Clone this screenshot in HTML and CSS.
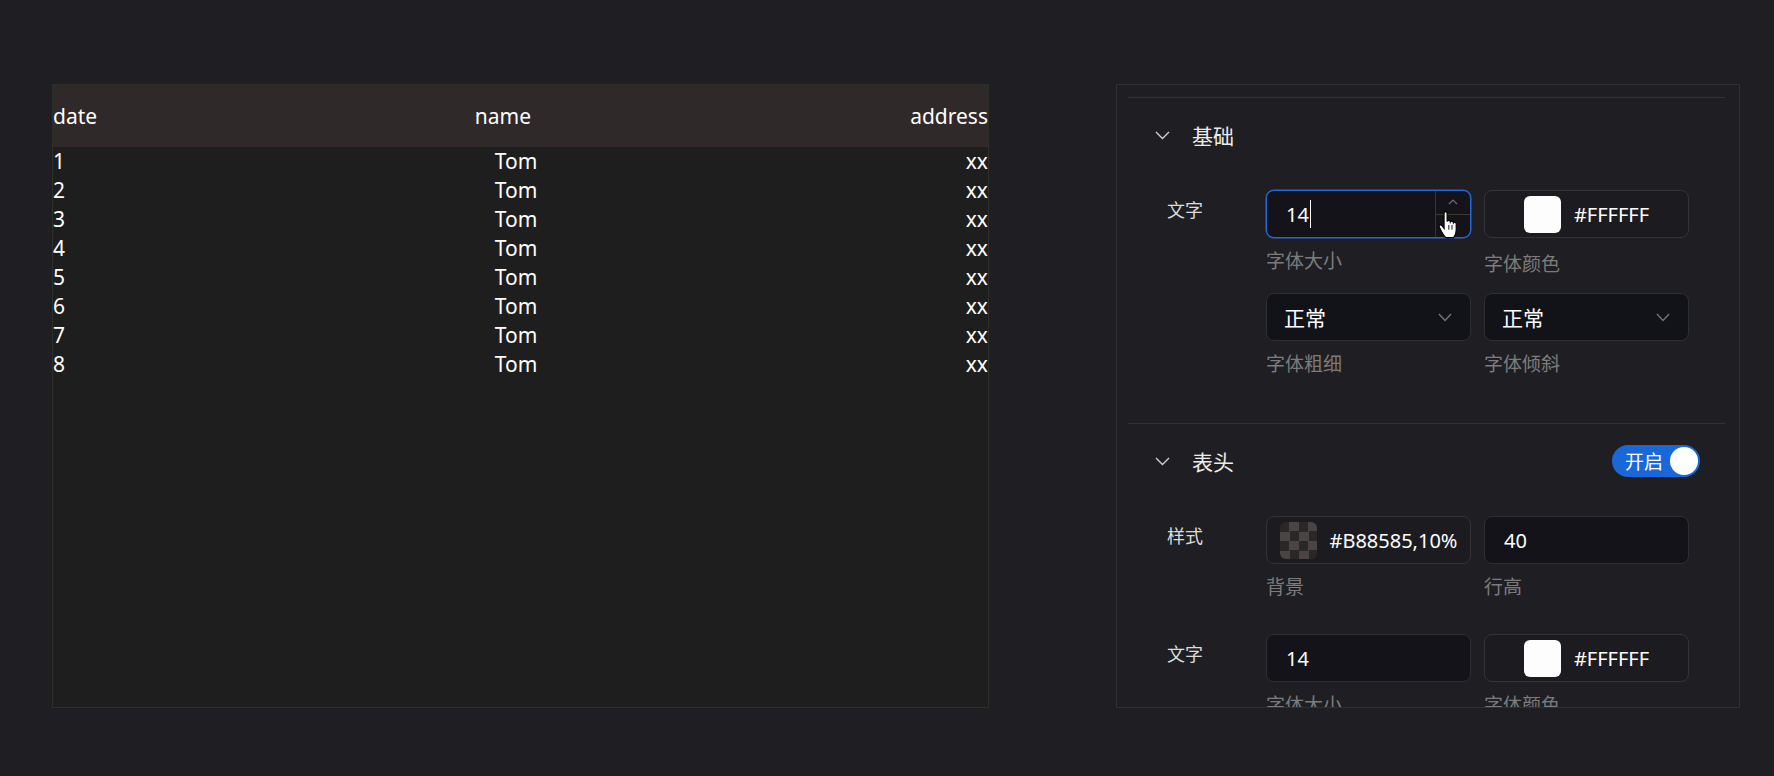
FILE: index.html
```html
<!DOCTYPE html>
<html lang="zh">
<head>
<meta charset="utf-8">
<title>Table config</title>
<link rel="stylesheet" href="styles.css">
</head>
<body>
<div class="page">
  <div class="table">
    <div class="thead">
      <div class="c-date">date</div>
      <div class="c-name">name</div>
      <div class="c-addr">address</div>
    </div>
    <div class="tbody">
      <div class="tr"><div class="c-date">1</div><div class="c-name">Tom</div><div class="c-addr">xx</div></div>
      <div class="tr"><div class="c-date">2</div><div class="c-name">Tom</div><div class="c-addr">xx</div></div>
      <div class="tr"><div class="c-date">3</div><div class="c-name">Tom</div><div class="c-addr">xx</div></div>
      <div class="tr"><div class="c-date">4</div><div class="c-name">Tom</div><div class="c-addr">xx</div></div>
      <div class="tr"><div class="c-date">5</div><div class="c-name">Tom</div><div class="c-addr">xx</div></div>
      <div class="tr"><div class="c-date">6</div><div class="c-name">Tom</div><div class="c-addr">xx</div></div>
      <div class="tr"><div class="c-date">7</div><div class="c-name">Tom</div><div class="c-addr">xx</div></div>
      <div class="tr"><div class="c-date">8</div><div class="c-name">Tom</div><div class="c-addr">xx</div></div>
    </div>
  </div>

  <div class="panel">
    <section class="sec sec-first">
      <div class="sec-head">
        <svg class="chev" width="15" height="9" viewBox="0 0 15 9"><path d="M1 1 L7.5 7.5 L14 1" fill="none" stroke="#d0d0d0" stroke-width="1.4"/></svg>
        <span class="sec-title">基础</span>
      </div>
      <div class="sec-body">
        <div class="field">
          <div class="label">文字</div>
          <div class="controls">
            <div class="item">
              <div class="box num focus">
                <span class="val">14</span><span class="caret"></span>
                <div class="spin">
                  <div class="spin-up"><svg width="10" height="6" viewBox="0 0 10 6"><path d="M1 5 L5 1 L9 5" fill="none" stroke="#6f6f6f" stroke-width="1.2"/></svg></div>
                  <div class="spin-down"></div>
                </div>
                <svg class="hand" width="21" height="28" viewBox="0 0 18 24"><path d="M5.2 2 Q5.2 0.6 6.5 0.6 Q7.8 0.6 7.8 2 L7.8 9 Q8.2 8 9.3 8 Q10.5 8 10.6 9.4 Q11 8.6 12 8.7 Q13.1 8.8 13.2 10.2 Q13.6 9.5 14.5 9.6 Q15.6 9.8 15.6 11.2 L15.6 16.5 Q15.6 20 13.4 22.8 L6.6 22.8 Q5 21 3 17.5 L1 13.6 Q0.6 12.4 1.6 12 Q2.6 11.6 3.6 12.8 L5.2 15 Z" fill="#fff" stroke="#000" stroke-width="1"/><path d="M9.3 12 V16 M12 12 V16" stroke="#000" stroke-width="0.8"/></svg>
              </div>
              <div class="cap">字体大小</div>
            </div>
            <div class="item">
              <div class="box color">
                <span class="swatch white"></span><span class="val">#FFFFFF</span>
              </div>
              <div class="cap cap-low">字体颜色</div>
            </div>
            <div class="item">
              <div class="box select">
                <span class="val sel">正常</span>
                <svg class="dd" width="14" height="9" viewBox="0 0 14 9"><path d="M1 1 L7 7.5 L13 1" fill="none" stroke="#777" stroke-width="1.3"/></svg>
              </div>
              <div class="cap">字体粗细</div>
            </div>
            <div class="item">
              <div class="box select">
                <span class="val sel">正常</span>
                <svg class="dd" width="14" height="9" viewBox="0 0 14 9"><path d="M1 1 L7 7.5 L13 1" fill="none" stroke="#777" stroke-width="1.3"/></svg>
              </div>
              <div class="cap">字体倾斜</div>
            </div>
          </div>
        </div>
      </div>
    </section>

    <section class="sec">
      <div class="sec-head">
        <svg class="chev" width="15" height="9" viewBox="0 0 15 9"><path d="M1 1 L7.5 7.5 L14 1" fill="none" stroke="#d0d0d0" stroke-width="1.4"/></svg>
        <span class="sec-title">表头</span>
        <div class="toggle"><span class="toggle-text">开启</span><span class="knob"></span></div>
      </div>
      <div class="sec-body">
        <div class="field">
          <div class="label">样式</div>
          <div class="controls">
            <div class="item">
              <div class="box color">
                <span class="swatch checker"></span><span class="val">#B88585,10%</span>
              </div>
              <div class="cap">背景</div>
            </div>
            <div class="item">
              <div class="box num">
                <span class="val">40</span>
              </div>
              <div class="cap">行高</div>
            </div>
          </div>
        </div>
        <div class="field">
          <div class="label">文字</div>
          <div class="controls">
            <div class="item">
              <div class="box num">
                <span class="val">14</span>
              </div>
              <div class="cap">字体大小</div>
            </div>
            <div class="item">
              <div class="box color">
                <span class="swatch white"></span><span class="val">#FFFFFF</span>
              </div>
              <div class="cap">字体颜色</div>
            </div>
          </div>
        </div>
      </div>
    </section>
  </div>
</div>
</body>
</html>
```

FILE: styles.css
```css
html, body {
  margin: 0;
  padding: 0;
  background: #1f1f23;
  font-family: "Noto Sans", "Noto Sans CJK SC", sans-serif;
  color: #fff;
}

.page {
  display: flex;
  align-items: flex-start;
  gap: 127px;
  padding: 84px 34px 0 52px;
  height: 776px;
  box-sizing: border-box;
}

/* ---------- table ---------- */
.table {
  width: 937px;
  height: 624px;
  box-sizing: border-box;
  border: 1px solid #2f2f2a;
  background: #1e1e1f;
  font-size: 21px;
  flex: none;
}

.thead, .tr {
  display: grid;
  grid-template-columns: 1fr 1fr 1fr;
  align-items: center;
}

.thead {
  height: 62px;
  background: #2f2929;
}

.tr {
  height: 29px;
  line-height: 29px;
}

.c-date { text-align: left; }
.c-name { text-align: center; }
.c-addr { text-align: right; }

.thead .c-name { padding-right: 35px; }
.tr .c-name { padding-right: 9px; }

/* ---------- panel ---------- */
.panel {
  width: 624px;
  height: 624px;
  box-sizing: border-box;
  border: 1px solid #303030;
  padding: 12px 14px 0 11px;
  overflow: hidden;
  flex: none;
}

.sec {
  border-top: 1px solid #323236;
  padding-bottom: 46px;
}

.sec-head {
  display: flex;
  align-items: center;
  height: 36px;
  margin-top: 19px;
  padding: 0 25px 0 27px;
}

.chev { flex: none; }

.sec-title {
  margin-left: 22px;
  font-size: 21px;
  color: #ececec;
}

.toggle {
  margin-left: auto;
  width: 88px;
  height: 32px;
  border-radius: 16px;
  background: #1a68d8;
  display: flex;
  align-items: center;
  justify-content: space-between;
  padding: 0 2px 0 13px;
  box-sizing: border-box;
}

.toggle-text {
  font-size: 19px;
  color: #fff;
}

.knob {
  width: 28px;
  height: 28px;
  border-radius: 50%;
  background: #fff;
}

.sec-body {
  margin-top: 37px;
  display: flex;
  flex-direction: column;
  gap: 34px;
}

.field {
  display: flex;
  padding-left: 39px;
}

.label {
  width: 99px;
  flex: none;
  padding-top: 7px;
  font-size: 18px;
  line-height: 26px;
  color: #dcdcdc;
}

.controls {
  display: grid;
  grid-template-columns: 205px 205px;
  column-gap: 13px;
  row-gap: 19px;
}

.cap {
  margin-top: 10px;
  font-size: 19px;
  line-height: 26px;
  color: #7c7c7c;
}

.cap.cap-low {
  margin-top: 13px;
  margin-bottom: -3px;
}

.box {
  position: relative;
  height: 48px;
  box-sizing: border-box;
  border-radius: 8px;
  border: 1px solid #2e2e33;
  display: flex;
  align-items: center;
  font-size: 20px;
}

.box.num {
  background: #131319;
  padding-left: 19px;
}

.box.num.focus {
  border-color: #2467d6;
  box-shadow: 0 0 0 0.5px #2467d6;
}

.caret {
  width: 1px;
  height: 28px;
  background: #fff;
  margin-left: 1px;
}

.spin {
  position: absolute;
  top: 0;
  right: 0;
  bottom: 0;
  width: 34px;
  border-left: 1px solid #34343a;
  display: flex;
  flex-direction: column;
}

.spin-up {
  flex: 1;
  border-bottom: 1px solid #3a3a30;
  display: flex;
  align-items: center;
  justify-content: center;
}

.spin-down { flex: 1; }

.hand {
  position: absolute;
  left: 171px;
  top: 20px;
}

.box.color {
  justify-content: center;
  gap: 13px;
  background: rgba(0, 0, 0, 0.08);
  border-color: #333338;
}

.swatch {
  width: 37px;
  height: 37px;
  border-radius: 6px;
  flex: none;
}

.swatch.white { background: #fdfdfd; }

.swatch.checker {
  background-color: #2a2727;
  background-image: conic-gradient(#4a4444 25%, #2a2727 0 50%, #4a4444 0 75%, #2a2727 0);
  background-size: 19px 19px;
}

.box.select {
  background: #121219;
  padding: 0 18px 0 17px;
  justify-content: space-between;
}

.val.sel { font-size: 21px; }
```
